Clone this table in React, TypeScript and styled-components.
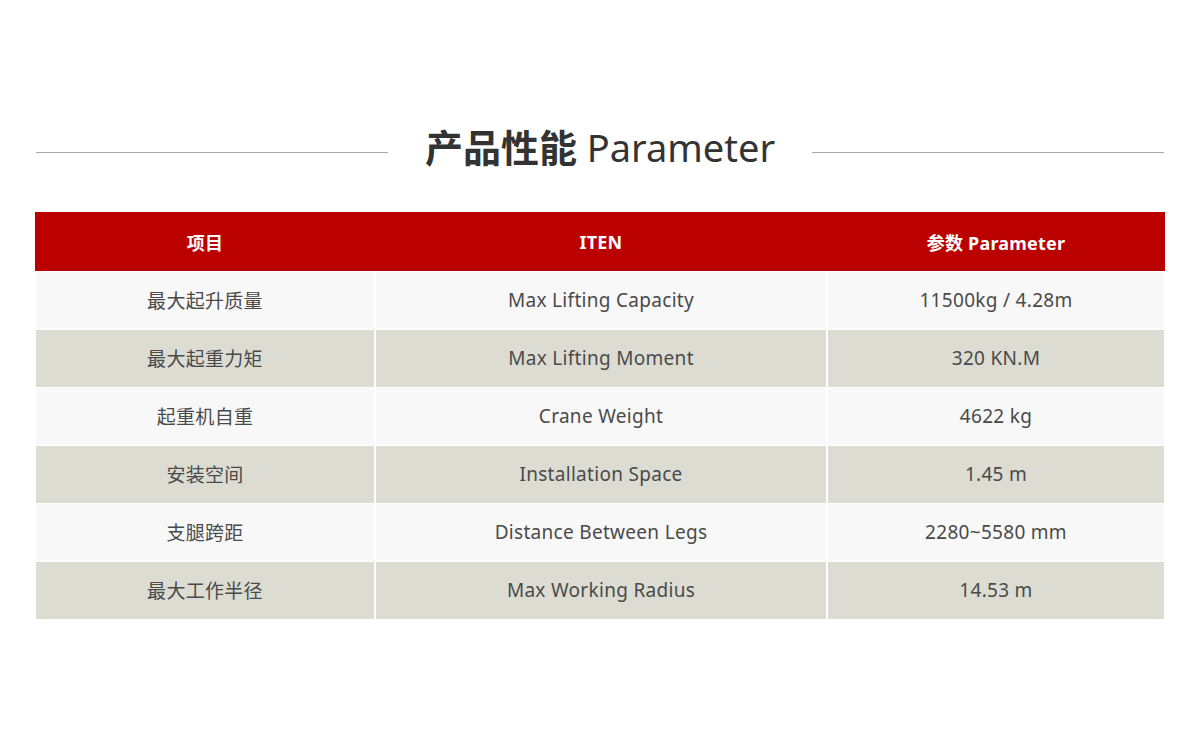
import React from "react";
import styled, { createGlobalStyle } from "styled-components";

const Global = createGlobalStyle`
  html, body { margin: 0; padding: 0; background: #ffffff; }
  body { font-family: "Noto Sans", "Noto Sans CJK SC", sans-serif; }
`;

const Page = styled.div`
  width: 1200px;
  height: 735px;
  box-sizing: border-box;
  padding: 118px 36px 0 36px;
`;

const TitleRow = styled.div`
  display: flex;
  align-items: center;
  height: 56px;
  gap: 37px;
`;

const Line = styled.div`
  flex: 1;
  height: 1px;
  background: #a8a8a8;
  margin-top: 12px;
`;

const Title = styled.h2`
  margin: 0;
  font-size: 38px;
  line-height: 56px;
  color: #333333;
  font-weight: 400;
  font-family: "Noto Sans", "Noto Sans CJK SC", sans-serif;
  white-space: nowrap;
`;

const TitleZh = styled.span`
  font-weight: 700;
  font-family: "Noto Sans CJK SC", sans-serif;
`;

const Table = styled.div`
  margin-top: 38px;
  display: grid;
  grid-template-columns: 338px 450px 336px;
  grid-template-rows: 59px repeat(6, 57px);
  column-gap: 2px;
  row-gap: 1px;
  background: #ffffff;
`;

const HeadCell = styled.div`
  background: #bb0000;
  color: #ffffff;
  font-weight: 700;
  font-size: 18px;
  letter-spacing: 0.2px;
  display: flex;
  align-items: center;
  justify-content: center;
  margin: 0 -1px;
  font-family: "Noto Sans", "Noto Sans CJK SC", sans-serif;
`;

const Cell = styled.div<{ $alt: boolean }>`
  background: ${(p) => (p.$alt ? "#dcdcd3" : "#f8f8f8")};
  color: #4a4a4a;
  font-size: 19px;
  letter-spacing: 0.3px;
  display: flex;
  align-items: center;
  justify-content: center;
  padding-bottom: 2px;
  box-sizing: border-box;
  font-family: "Noto Sans", "Noto Sans CJK SC", sans-serif;
`;

const rows: [string, string, string][] = [
  ["最大起升质量", "Max Lifting Capacity", "11500kg / 4.28m"],
  ["最大起重力矩", "Max Lifting Moment", "320 KN.M"],
  ["起重机自重", "Crane Weight", "4622 kg"],
  ["安装空间", "Installation Space", "1.45 m"],
  ["支腿跨距", "Distance Between Legs", "2280~5580 mm"],
  ["最大工作半径", "Max Working Radius", "14.53 m"],
];

export default function App() {
  return (
    <>
      <Global />
      <Page>
        <TitleRow>
          <Line />
          <Title>
            <TitleZh>产品性能</TitleZh> Parameter
          </Title>
          <Line />
        </TitleRow>
        <Table>
          <HeadCell>项目</HeadCell>
          <HeadCell>ITEN</HeadCell>
          <HeadCell>参数 Parameter</HeadCell>
          {rows.map((r, i) =>
            r.map((c, j) => (
              <Cell key={`${i}-${j}`} $alt={i % 2 === 1}>
                {c}
              </Cell>
            ))
          )}
        </Table>
      </Page>
    </>
  );
}
